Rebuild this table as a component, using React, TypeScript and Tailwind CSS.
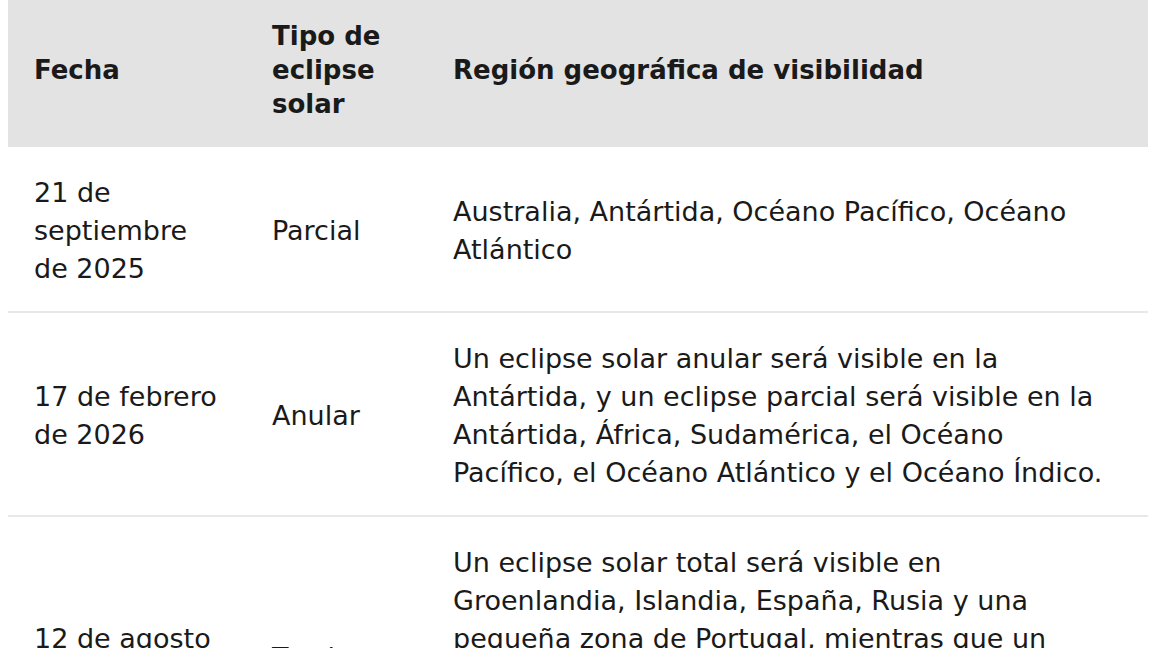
const rows = [
  {
    date: '21 de septiembre de 2025',
    type: 'Parcial',
    region: 'Australia, Antártida, Océano Pacífico, Océano Atlántico',
  },
  {
    date: '17 de febrero de 2026',
    type: 'Anular',
    region:
      'Un eclipse solar anular será visible en la Antártida, y un eclipse parcial será visible en la Antártida, África, Sudamérica, el Océano Pacífico, el Océano Atlántico y el Océano Índico.',
  },
  {
    date: '12 de agosto de 2026',
    type: 'Total',
    region:
      'Un eclipse solar total será visible en Groenlandia, Islandia, España, Rusia y una pequeña zona de Portugal, mientras que un eclipse parcial será visible en Europa, África, Norteamérica, el Océano Atlántico, el Océano Ártico y el Océano Pacífico.',
  },
];

export default function App() {
  return (
    <div className="bg-white min-h-screen pl-2 pr-1" style={{ fontFamily: '"DejaVu Sans", "Noto Sans", sans-serif' }}>
      <table className="w-full table-fixed border-collapse text-[#1a1a1a]">
        <colgroup>
          <col className="w-[238px]" />
          <col className="w-[181px]" />
          <col />
        </colgroup>
        <thead>
          <tr className="bg-[#e3e3e3]">
            <th className="px-[26px] pt-[19px] pb-[26px] text-left align-middle text-[26px] leading-[34px] font-bold">Fecha</th>
            <th className="px-[26px] pt-[19px] pb-[26px] text-left align-middle text-[26px] leading-[34px] font-bold">Tipo de eclipse solar</th>
            <th className="px-[26px] pt-[19px] pb-[26px] text-left align-middle text-[26px] leading-[34px] font-bold">Región geográfica de visibilidad</th>
          </tr>
        </thead>
        <tbody>
          {rows.map((r) => (
            <tr key={r.date} className="border-b-2 border-[#e8e8e8]">
              <td className="px-[26px] pt-[27px] pb-[23px] align-middle text-[27px] leading-[38px]">{r.date}</td>
              <td className="px-[26px] pt-[27px] pb-[23px] align-middle text-[27px] leading-[38px]">{r.type}</td>
              <td className="px-[26px] pt-[27px] pb-[23px] align-middle text-[27px] leading-[38px]">{r.region}</td>
            </tr>
          ))}
        </tbody>
      </table>
    </div>
  );
}
